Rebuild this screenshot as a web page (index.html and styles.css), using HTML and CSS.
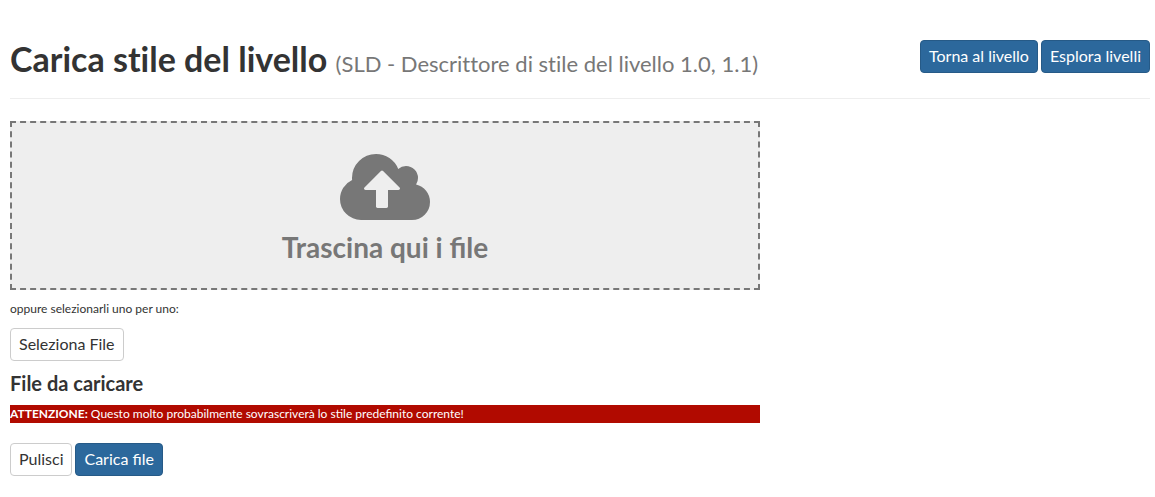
FILE: index.html
```html
<!DOCTYPE html>
<html lang="it">
<head>
<meta charset="utf-8">
<title>Carica stile del livello</title>
<link rel="stylesheet" href="styles.css">
</head>
<body>
<header class="page-header">
  <h1 class="page-title">Carica stile del livello <small class="subtitle">(SLD - Descrittore di stile del livello 1.0, 1.1)</small></h1>
  <nav class="actions">
    <a class="btn btn-primary" href="#">Torna al livello</a>
    <a class="btn btn-primary" href="#">Esplora livelli</a>
  </nav>
</header>
<main class="upload">
  <section class="drop-zone">
    <svg class="cloud" viewBox="0 0 1920 1408" aria-hidden="true"><path fill="currentColor" fill-rule="evenodd" d="M1280 736q0-14-9-23L919 361q-9-9-23-9t-23 9L522 712q-10 12-10 24 0 14 9 23t23 9h224v352q0 13 9.500 22.500T800 1152h192q13 0 22.500-9.500t9.500-22.500V768h224q13 0 22.500-9.500T1280 736zM1920 1024q0 159-112.500 271.500T1536 1408H448q-185 0-316.500-131.500T0 960q0-130 70-240t188-165q-2-30-2-43 0-212 150-362T768 0q156 0 285.500 87T1242 318q71-62 166-62 106 0 181 75t75 181q0 76-41 138 130 31 213.500 135.500T1920 1024z"/></svg>
    <h3 class="drop-title">Trascina qui i file</h3>
  </section>
  <p class="hint">oppure selezionarli uno per uno:</p>
  <button class="btn btn-default" type="button">Seleziona File</button>
  <h4 class="list-title">File da caricare</h4>
  <p class="warning"><strong>ATTENZIONE:</strong> Questo molto probabilmente sovrascriverà lo stile predefinito corrente!</p>
  <div class="actions">
    <button class="btn btn-default" type="button">Pulisci</button>
    <button class="btn btn-primary" type="button">Carica file</button>
  </div>
</main>
</body>
</html>
```
FILE: styles.css
```css
* {
  box-sizing: border-box;
}

body {
  margin: 0;
  padding: 36px 5px 20px 10px;
  font-family: Lato, "Liberation Sans", sans-serif;
  font-size: 16px;
  line-height: 22px;
  color: #333;
  background: #fff;
}

.page-header {
  display: flex;
  justify-content: space-between;
  align-items: flex-start;
  padding-bottom: 16px;
  border-bottom: 1px solid #eee;
}

.page-title {
  margin: 0;
  font-size: 34px;
  line-height: 46px;
  font-weight: 700;
  font-variant-ligatures: none;
}

.subtitle {
  font-size: 22px;
  line-height: 22px;
  font-weight: 400;
  color: #777;
}

.actions {
  display: flex;
  gap: 3px;
}

.page-header .actions {
  padding-top: 4px;
}

.btn {
  padding: 4px 8px 6px;
  border: 1px solid #ccc;
  border-radius: 4px;
  font: inherit;
  line-height: 21px;
  white-space: nowrap;
  text-decoration: none;
}

.btn-default {
  color: #333;
  background: #fff;
}

.btn-primary {
  color: #fff;
  background: #2c689c;
  border-color: #265a87;
}

.upload {
  max-width: 750px;
  padding-top: 22px;
}

.drop-zone {
  display: flex;
  flex-direction: column;
  align-items: center;
  padding: 31px 20px 23px;
  border: 2px dashed #777;
  color: #777;
  background: #eee;
}

.cloud {
  display: block;
  width: 90px;
  height: 66px;
}

.drop-title {
  margin: 10px 0 0;
  font-size: 28px;
  line-height: 35px;
  font-weight: 700;
}

.hint {
  margin: 10px 0;
  font-size: 12px;
  line-height: 18px;
}

.list-title {
  margin: 10px 0;
  font-size: 20px;
  line-height: 24px;
  font-weight: 700;
}

.warning {
  margin: 0 0 20px;
  font-size: 12px;
  line-height: 18px;
  color: #fff;
  background: #b10a00;
}
```
